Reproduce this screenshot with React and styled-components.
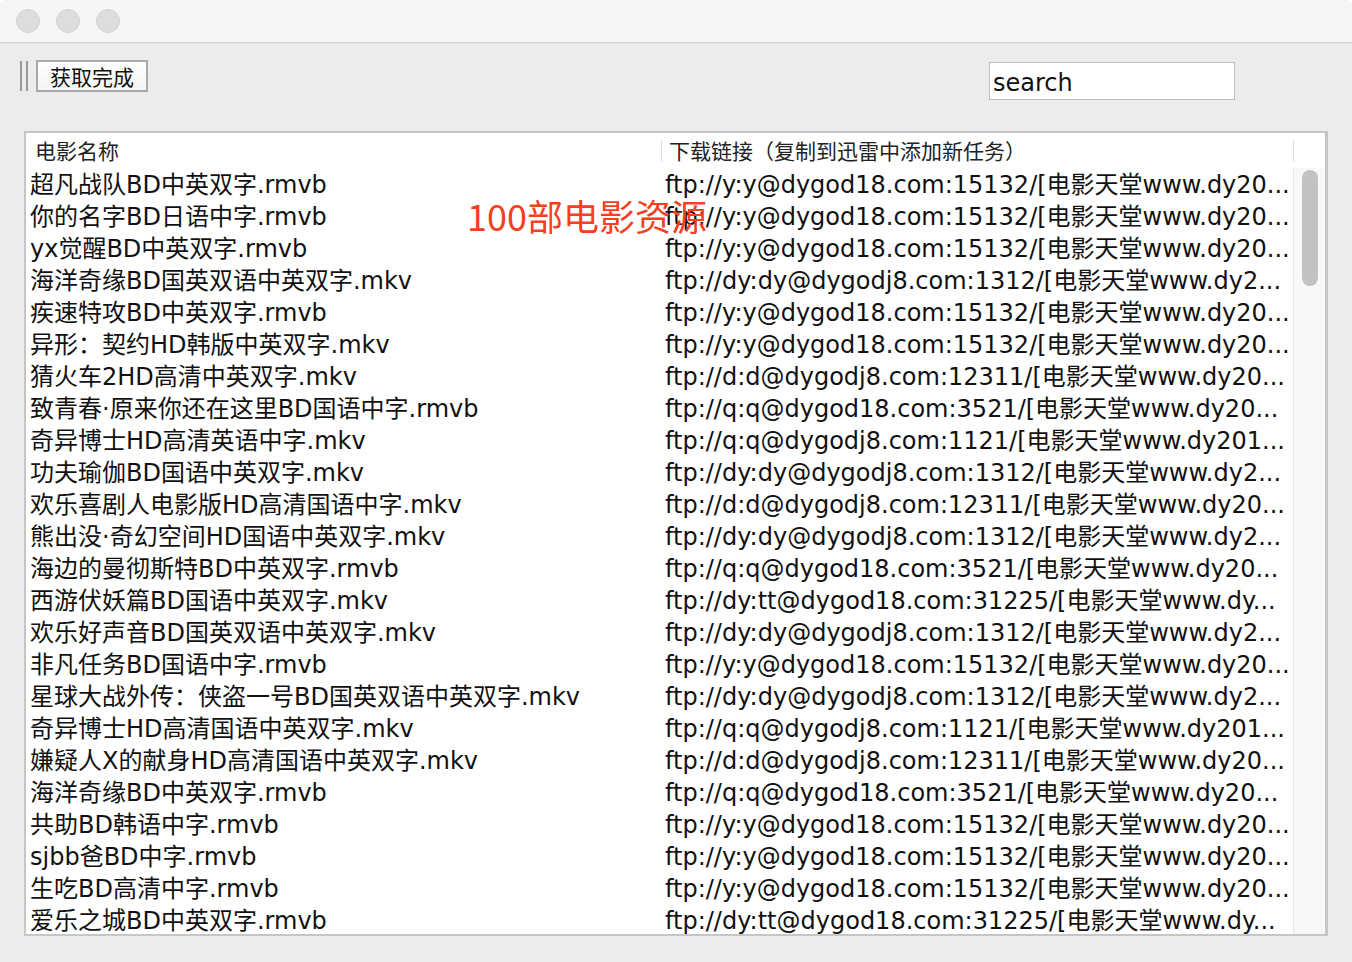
import React from "react";
import styled, { createGlobalStyle } from "styled-components";

const movies = [
  ["超凡战队BD中英双字.rmvb", "ftp://y:y@dygod18.com:15132/[电影天堂www.dy20..."],
  ["你的名字BD日语中字.rmvb", "ftp://y:y@dygod18.com:15132/[电影天堂www.dy20..."],
  ["yx觉醒BD中英双字.rmvb", "ftp://y:y@dygod18.com:15132/[电影天堂www.dy20..."],
  ["海洋奇缘BD国英双语中英双字.mkv", "ftp://dy:dy@dygodj8.com:1312/[电影天堂www.dy2..."],
  ["疾速特攻BD中英双字.rmvb", "ftp://y:y@dygod18.com:15132/[电影天堂www.dy20..."],
  ["异形：契约HD韩版中英双字.mkv", "ftp://y:y@dygod18.com:15132/[电影天堂www.dy20..."],
  ["猜火车2HD高清中英双字.mkv", "ftp://d:d@dygodj8.com:12311/[电影天堂www.dy20..."],
  ["致青春·原来你还在这里BD国语中字.rmvb", "ftp://q:q@dygod18.com:3521/[电影天堂www.dy20..."],
  ["奇异博士HD高清英语中字.mkv", "ftp://q:q@dygodj8.com:1121/[电影天堂www.dy201..."],
  ["功夫瑜伽BD国语中英双字.mkv", "ftp://dy:dy@dygodj8.com:1312/[电影天堂www.dy2..."],
  ["欢乐喜剧人电影版HD高清国语中字.mkv", "ftp://d:d@dygodj8.com:12311/[电影天堂www.dy20..."],
  ["熊出没·奇幻空间HD国语中英双字.mkv", "ftp://dy:dy@dygodj8.com:1312/[电影天堂www.dy2..."],
  ["海边的曼彻斯特BD中英双字.rmvb", "ftp://q:q@dygod18.com:3521/[电影天堂www.dy20..."],
  ["西游伏妖篇BD国语中英双字.mkv", "ftp://dy:tt@dygod18.com:31225/[电影天堂www.dy..."],
  ["欢乐好声音BD国英双语中英双字.mkv", "ftp://dy:dy@dygodj8.com:1312/[电影天堂www.dy2..."],
  ["非凡任务BD国语中字.rmvb", "ftp://y:y@dygod18.com:15132/[电影天堂www.dy20..."],
  ["星球大战外传：侠盗一号BD国英双语中英双字.mkv", "ftp://dy:dy@dygodj8.com:1312/[电影天堂www.dy2..."],
  ["奇异博士HD高清国语中英双字.mkv", "ftp://q:q@dygodj8.com:1121/[电影天堂www.dy201..."],
  ["嫌疑人X的献身HD高清国语中英双字.mkv", "ftp://d:d@dygodj8.com:12311/[电影天堂www.dy20..."],
  ["海洋奇缘BD中英双字.rmvb", "ftp://q:q@dygod18.com:3521/[电影天堂www.dy20..."],
  ["共助BD韩语中字.rmvb", "ftp://y:y@dygod18.com:15132/[电影天堂www.dy20..."],
  ["sjbb爸BD中字.rmvb", "ftp://y:y@dygod18.com:15132/[电影天堂www.dy20..."],
  ["生吃BD高清中字.rmvb", "ftp://y:y@dygod18.com:15132/[电影天堂www.dy20..."],
  ["爱乐之城BD中英双字.rmvb", "ftp://dy:tt@dygod18.com:31225/[电影天堂www.dy..."],
];

export default function App() {
  return (
    <>
      <GlobalStyle />
      <Window>
        <TitleBar>
          <Light />
          <Light />
          <Light />
        </TitleBar>
        <Toolbar>
          <LeftGroup>
            <Grip />
            <FetchButton>获取完成</FetchButton>
          </LeftGroup>
          <SearchInput defaultValue="search" />
        </Toolbar>
        <TablePane>
          <HeaderRow>
            <HeaderCell>电影名称</HeaderCell>
            <HeaderCell $divider>下载链接（复制到迅雷中添加新任务）</HeaderCell>
            <HeaderCell $divider />
          </HeaderRow>
          <Body>
            <Rows>
              {movies.map(([name, link], i) => (
                <Row key={i}>
                  <NameCell>{name}</NameCell>
                  <LinkCell>{link}</LinkCell>
                </Row>
              ))}
            </Rows>
            <ScrollTrack>
              <ScrollThumb />
            </ScrollTrack>
          </Body>
          <Overlay>100部电影资源</Overlay>
        </TablePane>
      </Window>
    </>
  );
}

const GlobalStyle = createGlobalStyle`
  html, body {
    margin: 0;
    padding: 0;
    background: #ffffff;
  }
  body {
    font-family: "DejaVu Sans", "Noto Sans CJK SC", sans-serif;
  }
`;

const Window = styled.div`
  width: 1352px;
  height: 962px;
  background: #ececec;
  border-radius: 6px 6px 0 0;
  overflow: hidden;
  display: flex;
  flex-direction: column;
`;

const TitleBar = styled.div`
  height: 43px;
  flex-shrink: 0;
  box-sizing: border-box;
  padding: 9px 16px 0;
  display: flex;
  gap: 16px;
  background: #f6f6f6;
  border-bottom: 1px solid #d2d2d2;
  box-shadow: 0 1px 0 #e4e4e4;
`;

const Light = styled.div`
  width: 24px;
  height: 24px;
  box-sizing: border-box;
  border-radius: 50%;
  background: #dddddd;
  border: 1px solid #d3d3d3;
`;

const Toolbar = styled.div`
  height: 88px;
  flex-shrink: 0;
  box-sizing: border-box;
  padding: 17px 117px 0 20px;
  display: flex;
  justify-content: space-between;
  align-items: flex-start;
`;

const LeftGroup = styled.div`
  display: flex;
  align-items: flex-start;
  gap: 8px;
`;

const Grip = styled.div`
  width: 8px;
  height: 30px;
  margin-top: 1px;
  box-sizing: border-box;
  border-left: 2px solid #9a9a9a;
  border-right: 2px solid #9a9a9a;
`;

const FetchButton = styled.button`
  width: 112px;
  height: 32px;
  box-sizing: border-box;
  padding: 0;
  border: 2px solid #a9a9a9;
  border-radius: 0;
  background: linear-gradient(#ffffff, #f4f4f4);
  font-family: "Noto Sans CJK SC", sans-serif;
  font-size: 21px;
  line-height: 26px;
  color: #111111;
`;

const SearchInput = styled.input`
  width: 246px;
  height: 38px;
  margin-top: 2px;
  box-sizing: border-box;
  padding: 4px 0 0 3px;
  border: 1px solid #c0c0c0;
  border-radius: 0;
  outline: none;
  background: #ffffff;
  font-family: "DejaVu Sans", sans-serif;
  font-size: 24px;
  color: #111111;
`;

const TablePane = styled.div`
  position: relative;
  height: 805px;
  margin: 0 24px;
  box-sizing: border-box;
  border: 2px solid #c6c6c6;
  border-right-width: 3px;
  background: #ffffff;
  overflow: hidden;
`;

const HeaderRow = styled.div`
  display: grid;
  grid-template-columns: 635px 632px 1fr;
  height: 35px;
`;

const HeaderCell = styled.div`
  position: relative;
  padding-left: ${(p) => (p.$divider ? "8px" : "9px")};
  font-family: "Noto Sans CJK SC", sans-serif;
  font-size: 21px;
  line-height: 35px;
  color: #222222;
  white-space: nowrap;

  &::before {
    content: "";
    display: ${(p) => (p.$divider ? "block" : "none")};
    position: absolute;
    left: 0;
    top: 7px;
    bottom: 6px;
    width: 1px;
    background: #dedede;
  }
`;

const Body = styled.div`
  display: flex;
  height: 766px;
`;

const Rows = styled.div`
  flex: 1;
  padding-top: 1px;
  overflow: hidden;
`;

const Row = styled.div`
  display: grid;
  grid-template-columns: 635px 632px;
  height: 32px;
  font-size: 24px;
  line-height: 32px;
  color: #111111;
`;

const NameCell = styled.div`
  padding-left: 4px;
  white-space: nowrap;
  overflow: hidden;
`;

const LinkCell = styled.div`
  padding-left: 4px;
  white-space: nowrap;
  overflow: hidden;
`;

const ScrollTrack = styled.div`
  width: 32px;
  box-sizing: border-box;
  padding: 2px 0 0 8px;
  background: #f8f8f8;
  border-left: 1px solid #e6e6e6;
`;

const ScrollThumb = styled.div`
  width: 16px;
  height: 116px;
  border-radius: 8px;
  background: #c2c2c2;
`;

const Overlay = styled.div`
  position: absolute;
  left: 441px;
  top: 62px;
  font-family: "Noto Sans CJK SC", sans-serif;
  font-size: 36px;
  line-height: 40px;
  color: #f4401e;
  white-space: nowrap;
`;
